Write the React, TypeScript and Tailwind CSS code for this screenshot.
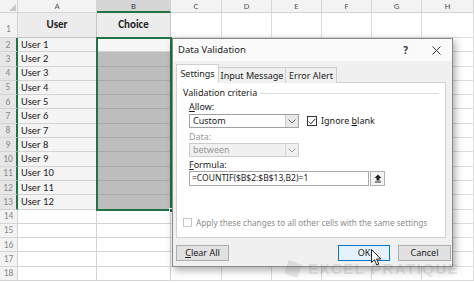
import React from "react";

const cols = ["A", "B", "C", "D", "E", "F", "G", "H"];
const widths = ["w-[79px]", "w-[74px]", "w-[51px]", "w-[50px]", "w-[50px]", "w-[50px]", "w-[50px]", "flex-1"];
const rows = Array.from({ length: 17 }, (_, i) => i + 2);

const ChevronDown = ({ muted }: { muted?: boolean }) => (
  <svg width="8" height="5" viewBox="0 0 8 5" fill="none">
    <path d="M0.5 0.5 L4 4 L7.5 0.5" stroke={muted ? "#a0a0a0" : "#606060"} strokeWidth="1" />
  </svg>
);

const Sheet = () => (
  <div className="flex flex-col text-[10px] text-[#222]" style={{ fontFamily: "Carlito, 'Liberation Sans', sans-serif" }}>
    {/* column headers */}
    <div className="flex h-[13px] bg-[#f3f3f3] text-[9px] text-[#555]">
      <div className="w-[18px] border-r border-b border-[#d4d4d4] flex items-end justify-end">
        <div className="w-0 h-0 border-l-[7px] border-l-transparent border-b-[7px] border-b-[#c8c8c8] mb-[1px] mr-[1px]" />
      </div>
      {cols.map((c, i) => (
        <div
          key={c}
          className={`${widths[i]} flex items-center justify-center border-r border-[#d4d4d4] ${
            c === "B" ? "bg-[#d6d6d6] border-b-2 border-b-[#217346] text-[#444]" : "border-b"
          }`}
        >
          {c}
        </div>
      ))}
    </div>
    {/* row 1 */}
    <div className="flex h-[25px]">
      <div className="w-[18px] bg-[#f3f3f3] border-r border-b border-[#d4d4d4] flex items-end justify-center text-[9.5px] text-[#888] pb-[1px]">1</div>
      <div className="w-[79px] bg-[#ececec] border-r border-b border-[#c6c6c6] flex items-center justify-center font-bold text-[11px]">User</div>
      <div className="w-[74px] bg-[#ececec] border-r border-b border-[#c6c6c6] flex items-center justify-center font-bold text-[11px]">Choice</div>
      {cols.slice(2).map((c, i) => (
        <div key={c} className={`${widths[i + 2]} border-r border-b border-[#dcdcdc]`} />
      ))}
    </div>
    {rows.map((r) => {
      const sel = r <= 13;
      return (
        <div key={r} className="flex h-[14.3px]">
          <div
            className={`w-[18px] border-b border-[#d4d4d4] flex items-center justify-center text-[9.5px] text-[#888] ${
              sel ? "bg-[#e6e6e6] border-r-2 border-r-[#217346]" : "bg-[#f3f3f3] border-r"
            }`}
          >
            {r}
          </div>
          <div className={`w-[79px] border-r border-b border-[#d4d4d4] flex items-center pl-[3px] text-[10.5px] ${sel ? "bg-[#f4f4f4]" : ""}`}>
            {sel ? `User ${r - 1}` : ""}
          </div>
          <div
            className={`w-[74px] border-r border-b border-[#d4d4d4] ${
              r === 2 ? "bg-[#f6f6f6]" : sel ? "bg-[#bdbdbd] border-b-[#a9a9a9]" : ""
            }`}
          />
          {cols.slice(2).map((c, i) => (
            <div key={c} className={`${widths[i + 2]} border-r border-b border-[#dcdcdc]`} />
          ))}
        </div>
      );
    })}
  </div>
);

const Dialog = () => (
  <div
    className="absolute left-[172px] top-[38px] w-[281px] h-[229px] bg-[#f0f0f0] border border-[#8a8a8a] shadow-[2px_3px_8px_rgba(0,0,0,0.35)] flex flex-col text-[9px] text-[#1a1a1a]"
    style={{ fontFamily: "'Noto Sans', 'Open Sans', sans-serif" }}
  >
    {/* title bar */}
    <div className="h-[22px] bg-[#fafafa] flex items-center pl-[5px] pr-[11px]">
      <span className="text-[9.5px]">Data Validation</span>
      <span className="ml-auto mr-[24px] text-[10px] font-bold text-[#333]">?</span>
      <svg width="9" height="9" viewBox="0 0 9 9">
        <path d="M0.5 0.5 L8.5 8.5 M8.5 0.5 L0.5 8.5" stroke="#333" strokeWidth="1" />
      </svg>
    </div>
    <div className="px-[3px] pt-[3px] flex flex-col">
      {/* tabs */}
      <div className="flex items-end h-[19px] relative z-10">
        <div className="w-[43px] h-[19px] bg-white border border-[#d0d0d0] border-b-white flex items-center justify-center">Settings</div>
        <div className="w-[67px] h-[16px] bg-[#f0f0f0] border-t border-r border-[#d0d0d0] flex items-center justify-center">Input Message</div>
        <div className="w-[51px] h-[16px] bg-[#f0f0f0] border-t border-r border-[#d0d0d0] flex items-center justify-center">Error Alert</div>
      </div>
      {/* panel */}
      <div className="w-[270px] h-[156px] bg-white border border-[#d0d0d0] -mt-px flex flex-col px-[6px]">
        <div className="flex items-center mt-[4px] h-[12px]">
          <span className="mr-[3px]">Validation criteria</span>
          <div className="flex-1 border-t border-[#dcdcdc] mt-[1px]" />
        </div>
        <div className="pl-[6px] flex flex-col">
          <div className="mt-[2px] h-[12px] flex items-center">
            <span><u>A</u>llow:</span>
          </div>
          <div className="flex items-center mt-[1px]">
            <div className="w-[110px] h-[14px] border border-[#a0a0a0] flex items-center">
              <span className="pl-[3px] flex-1">Custom</span>
              <div className="w-[13px] h-full bg-[#e8e8e8] border-l border-[#c8c8c8] flex items-center justify-center">
                <ChevronDown />
              </div>
            </div>
            <div className="ml-[8px] w-[10px] h-[10px] border border-[#333] flex items-center justify-center">
              <svg width="8" height="7" viewBox="0 0 8 7">
                <path d="M0.8 3.5 L3 5.8 L7.3 0.8" stroke="#222" strokeWidth="1" fill="none" />
              </svg>
            </div>
            <span className="ml-[4px]">Ignore <u>b</u>lank</span>
          </div>
          <div className="mt-[2px] h-[13px] flex items-center text-[#9a9a9a]">Data:</div>
          <div className="w-[110px] h-[14px] border border-[#cccccc] bg-[#f0f0f0] flex items-center text-[#9a9a9a]">
            <span className="pl-[3px] flex-1">between</span>
            <div className="w-[13px] h-full border-l border-[#d8d8d8] flex items-center justify-center">
              <ChevronDown muted />
            </div>
          </div>
          <div className="mt-[1px] h-[13px] flex items-center">
            <span><u>F</u>ormula:</span>
          </div>
          <div className="flex items-center">
            <div className="w-[180px] h-[15px] border border-[#a8a8a8] flex items-center pl-[2px] text-[8.5px]">=COUNTIF($B$2:$B$13,B2)=1</div>
            <div className="ml-[1px] w-[15px] h-[15px] border border-[#b0b0b0] bg-[#f4f4f4] flex items-center justify-center">
              <svg width="8" height="9" viewBox="0 0 8 9">
                <path d="M4 0.5 L7.5 4 H5.5 V6.5 H2.5 V4 H0.5 Z" fill="#222" />
                <rect x="1" y="7.5" width="6" height="1" fill="#222" />
              </svg>
            </div>
          </div>
        </div>
        <div className="mt-auto mb-[8px] flex items-center text-[#8c8c8c] whitespace-nowrap">
          <div className="w-[9px] h-[9px] border border-[#c4c4c4] mr-[4px] shrink-0" />
          <span className="text-[8.2px]">Apply these changes to all other cells with the same settings</span>
        </div>
      </div>
      {/* buttons */}
      <div className="flex mt-[7px]">
        <div className="w-[53px] h-[16px] bg-[#e1e1e1] border border-[#adadad] flex items-center justify-center">
          <span><u>C</u>lear All</span>
        </div>
        <div className="ml-auto w-[52px] h-[16px] bg-[#e5f1fb] border border-[#0078d7] flex items-center justify-center">OK</div>
        <div className="ml-[8px] mr-[-2px] w-[53px] h-[16px] bg-[#e1e1e1] border border-[#adadad] flex items-center justify-center">Cancel</div>
      </div>
    </div>
  </div>
);

export default function App() {
  return (
    <div className="relative w-[474px] h-[283px] overflow-hidden bg-white">
      <Sheet />
      {/* selection outline B2:B13 */}
      <div className="absolute left-[96px] top-[37px] w-[76px] h-[174px] border-2 border-[#217346] pointer-events-none" />
      <div className="absolute left-[169px] top-[208px] w-[5px] h-[5px] bg-[#217346] border border-white" />
      <Dialog />
      {/* watermark */}
      <div className="absolute left-[286px] top-[261px] flex items-center gap-[8px] opacity-[0.12] pointer-events-none whitespace-nowrap">
        <div className="w-[14px] h-[14px] bg-[#555] rotate-[20deg]" />
        <span className="text-[15px] leading-[16px] font-bold tracking-[1.5px] text-[#444]" style={{ fontFamily: "'Liberation Sans', sans-serif" }}>
          EXCEL PRATIQUE
        </span>
      </div>
      {/* mouse cursor */}
      <svg className="absolute left-[371px] top-[249px]" width="11" height="17" viewBox="0 0 11 17">
        <path d="M0.5 0.5 V13.5 L3.5 10.8 L5.8 16 L7.8 15.1 L5.6 10 H9.8 Z" fill="white" stroke="#222" strokeWidth="1" />
      </svg>
    </div>
  );
}
